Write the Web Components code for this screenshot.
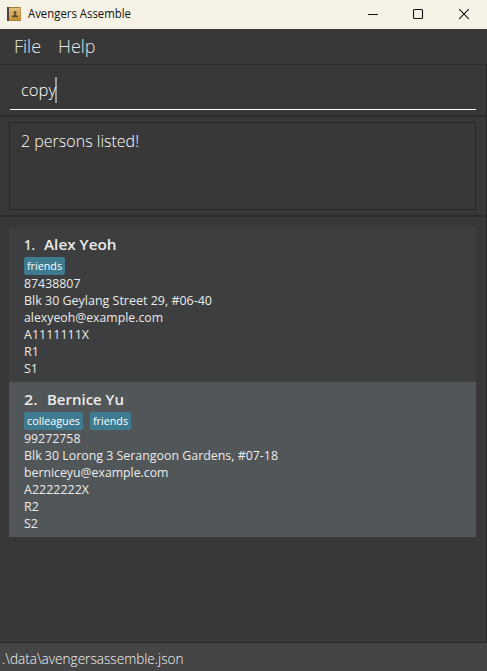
<!DOCTYPE html>
<html lang="en">
<head>
<meta charset="utf-8">
<title>Avengers Assemble</title>
<style>
html,body{margin:0;height:100%;overflow:hidden;background:#383838}
body{font-family:"Open Sans","Noto Sans",sans-serif}
</style>
</head>
<body>
<address-app></address-app>
<script>
const define = (name, html, setup) => customElements.define(name, class extends HTMLElement {
  connectedCallback() {
    if (this.shadowRoot) return;
    const t = document.createElement('template');
    t.innerHTML = html;
    this.attachShadow({mode: 'open'}).append(t.content.cloneNode(true));
    if (setup) setup(this, this.shadowRoot);
  }
});

// A single line of text, condensed horizontally so that it is w pixels wide.
define('fit-text', `<style>:host{display:block;white-space:pre}span{display:inline-block;transform-origin:0 50%}</style><span><slot></slot></span>`, (el, root) => {
  const s = root.querySelector('span');
  const w = +el.getAttribute('w');
  el.style.width = w + 'px';
  requestAnimationFrame(() => {
    if (s.offsetWidth) s.style.transform = `scaleX(${(w / s.getBoundingClientRect().width).toFixed(4)})`;
  });
});

define('title-bar', `<style>
:host{display:flex;align-items:center;height:29px;background:#f6f2e6;color:#111;font-size:12px;box-sizing:border-box;padding:0 17px 2px 7px}
.icon{margin-right:7px;flex:none}.ctl{margin-left:auto;display:flex;gap:34px}
svg{display:block}
</style>
<svg class="icon" width="14" height="14" viewBox="0 0 14 14"><defs><linearGradient id="g" x2="0" y2="1"><stop stop-color="#dfbd78"/><stop offset="1" stop-color="#c79437"/></linearGradient></defs><rect width="14" height="14" rx="1" fill="#a87c3c"/><rect x="2" y="1" width="11.5" height="12" fill="url(#g)"/><rect width="2" height="14" fill="#51443c"/><circle cx="8" cy="5.5" r="1.5" fill="#5b4b2c"/><path d="M7.3 6.5h1.4V8l2.3.8v1.400H5V8.800l2.300-.8z" fill="#5b4b2c"/></svg>
<fit-text w="103"><slot></slot></fit-text>
<div class="ctl">
<svg width="12" height="12"><path d="M2 6.500h10" stroke="#111"/></svg>
<svg width="12" height="12"><rect x="1.500" y="1.500" width="9" height="9" rx="1" fill="none" stroke="#111" stroke-width="1.1"/></svg>
<svg width="12" height="12"><path d="M1.200 1.200l9.600 9.600M10.800 1.200L1.200 10.800" stroke="#111" stroke-width="1.1"/></svg>
</div>`);

define('menu-bar', `<style>:host{display:flex;gap:17px;height:35px;line-height:35px;padding-left:13.5px;font-size:18px;font-weight:300;color:#e6e6e6;border-bottom:1px solid #2a2a2a}</style><slot></slot>`);

define('command-box', `<style>
:host{display:block;height:50px;padding:7px 10px 0;box-sizing:border-box}
.in{display:flex;align-items:center;height:38px;border-bottom:1px solid #fff;padding:0 0 2px 11px;font-size:17px;font-weight:300;color:#fff;box-sizing:border-box}
i{width:2px;height:26px;background:#999;margin-left:-1px}
</style><div class="in"><fit-text w="35"><slot></slot></fit-text><i></i></div>`);

define('result-display', `<style>
:host{display:block;height:102px;box-sizing:border-box;border-top:2px solid #2b2b2b;border-bottom:2px solid #2b2b2b;padding:5px 10px 5px 9px}
div{height:88px;box-sizing:border-box;border:1px solid #272727;padding:5px 11px;font-size:17px;line-height:25px;font-weight:300;color:#fff}
</style><div><fit-text w="118"><slot></slot></fit-text></div>`);

define('tag-chip', `<style>:host{display:block;height:18px;line-height:18px;padding:0 3px;border-radius:2px;background:#3e7b91;color:#fff;font-size:11px;box-sizing:border-box}</style><slot></slot>`);

define('person-card', `<style>
:host{display:block;height:155px;box-sizing:border-box;padding:7px 15px 0;background:#3c3e3f;color:#ebebeb;font-size:13px;line-height:17px}
:host([alt]){background:#515658}
.name{display:flex;gap:9px;height:20px;line-height:20px;font-size:15px;font-weight:600}
.tags{display:flex;gap:7px;height:18px;margin:3px 0 0}
</style><div class="name"><slot name="name"></slot></div><div class="tags"><slot name="tag"></slot></div><slot></slot>`);

define('status-bar', `<style>:host{display:block;height:29px;box-sizing:border-box;border-top:1px solid #292929;background:#454545;color:#f4f4f4;font-size:14.500px;font-weight:300;line-height:31px;padding-left:2px}</style><slot></slot>`);

define('address-app', `<style>
:host{display:flex;flex-direction:column;width:487px;height:671px;background:#383838}
.body{flex:1;display:flex;flex-direction:column;border-right:1px solid #262626}
.list{padding:10px 10px 0 9px}
</style>
<title-bar>Avengers Assemble</title-bar>
<menu-bar><fit-text w="27">File</fit-text><fit-text w="37.5">Help</fit-text></menu-bar>
<div class="body">
<command-box>copy</command-box>
<result-display>2 persons listed!</result-display>
<div class="list">
<person-card>
<fit-text slot="name" w="11">1.</fit-text><fit-text slot="name" w="72.5">Alex Yeoh</fit-text>
<tag-chip slot="tag"><fit-text w="35">friends</fit-text></tag-chip>
<fit-text w="56.5">87438807</fit-text><fit-text w="188">Blk 30 Geylang Street 29, #06-40</fit-text><fit-text w="139">alexyeoh@example.com</fit-text><fit-text w="65">A1111111X</fit-text><fit-text w="15">R1</fit-text><fit-text w="14">S1</fit-text>
</person-card>
<person-card alt>
<fit-text slot="name" w="13.5">2.</fit-text><fit-text slot="name" w="77">Bernice Yu</fit-text>
<tag-chip slot="tag"><fit-text w="53">colleagues</fit-text></tag-chip><tag-chip slot="tag"><fit-text w="35">friends</fit-text></tag-chip>
<fit-text w="56.5">99272758</fit-text><fit-text w="254">Blk 30 Lorong 3 Serangoon Gardens, #07-18</fit-text><fit-text w="144.5">berniceyu@example.com</fit-text><fit-text w="65">A2222222X</fit-text><fit-text w="15">R2</fit-text><fit-text w="14">S2</fit-text>
</person-card>
</div>
</div>
<status-bar><fit-text w="181.5">.\\data\\avengersassemble.json</fit-text></status-bar>`);
</script>
</body>
</html>
